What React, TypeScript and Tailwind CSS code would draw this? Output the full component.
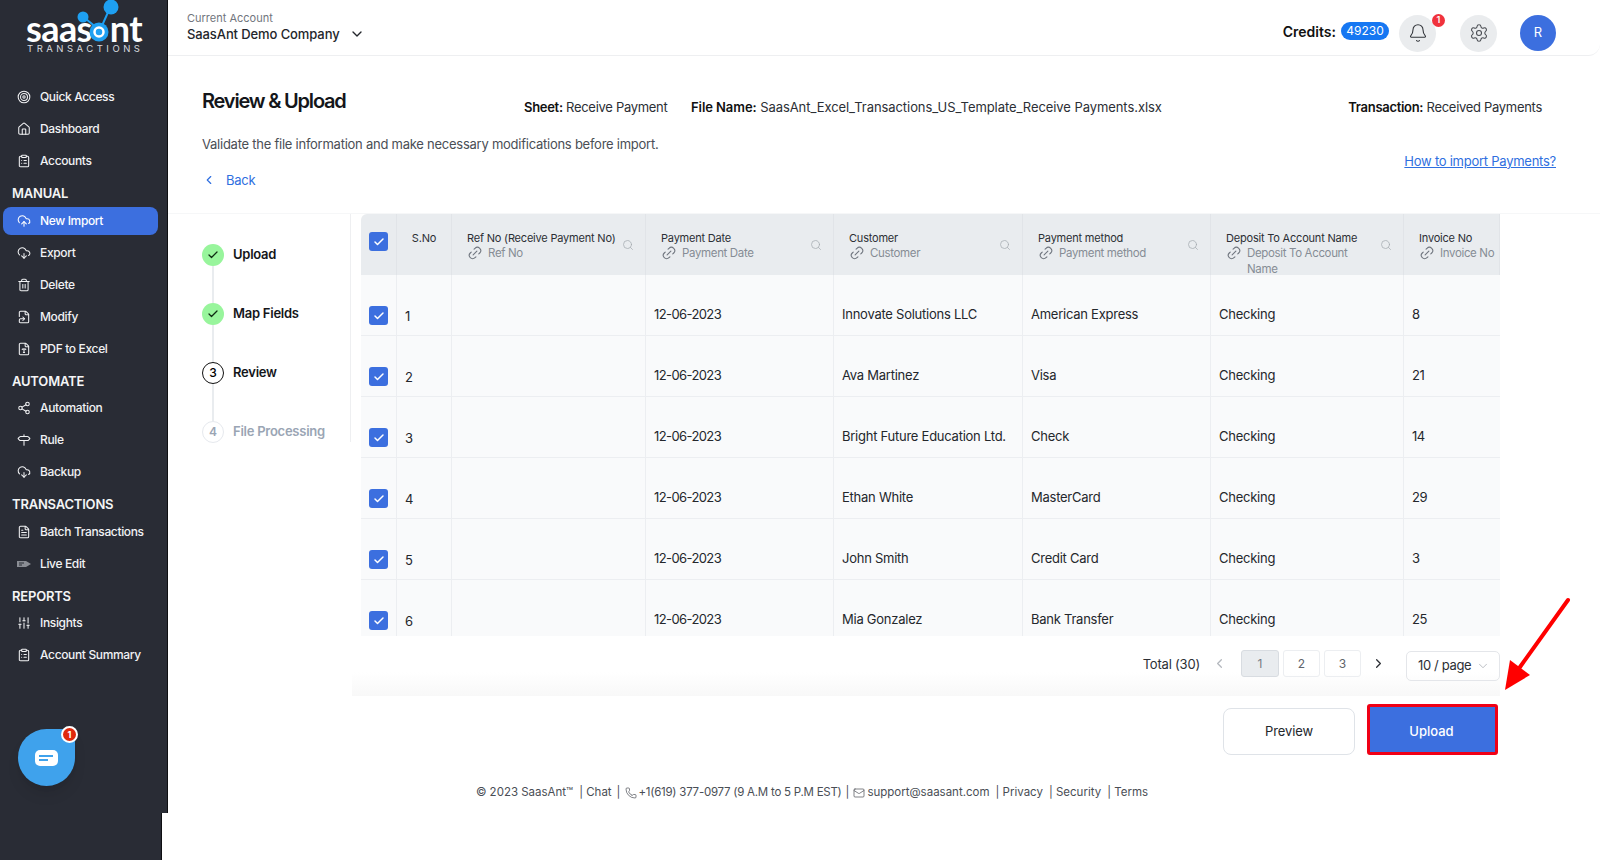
import {
  Bell,
  Check,
  ChevronDown,
  ChevronLeft,
  ChevronRight,
  ClipboardList,
  CloudDownload,
  CloudUpload,
  FileSymlink,
  FileText,
  FileType,
  Home,
  Link2,
  Mail,
  Phone,
  Search,
  Settings,
  Share2,
  Signpost,
  SlidersVertical,
  Target,
  Trash2,
} from "lucide-react";

function LiveEditIcon({ className }: { size?: number; strokeWidth?: number; className?: string }) {
  return (
    <svg className={className} width="14" height="14" viewBox="0 0 14 14">
      <path d="M0 4h9l5 3-5 3H0z" fill="#8a8d94" />
      <path d="M2 6h5M2 8h3" stroke="#292c35" strokeWidth="1" />
    </svg>
  );
}

const nav = [
  { label: "Quick Access", icon: Target },
  { label: "Dashboard", icon: Home },
  { label: "Accounts", icon: ClipboardList },
  { heading: "MANUAL" },
  { label: "New Import", icon: CloudUpload, active: true },
  { label: "Export", icon: CloudDownload },
  { label: "Delete", icon: Trash2 },
  { label: "Modify", icon: FileSymlink },
  { label: "PDF to Excel", icon: FileType },
  { heading: "AUTOMATE" },
  { label: "Automation", icon: Share2 },
  { label: "Rule", icon: Signpost },
  { label: "Backup", icon: CloudDownload },
  { heading: "TRANSACTIONS" },
  { label: "Batch Transactions", icon: FileText },
  { label: "Live Edit", icon: LiveEditIcon },
  { heading: "REPORTS" },
  { label: "Insights", icon: SlidersVertical },
  { label: "Account Summary", icon: ClipboardList },
];

const columns = [
  { w: "w-[36px]" },
  { w: "w-[55px]", title: "S.No" },
  { w: "w-[194px]", title: "Ref No (Receive Payment No)", sub: "Ref No" },
  { w: "w-[188px]", title: "Payment Date", sub: "Payment Date" },
  { w: "w-[189px]", title: "Customer", sub: "Customer" },
  { w: "w-[188px]", title: "Payment method", sub: "Payment method" },
  { w: "w-[193px]", title: "Deposit To Account Name", sub: "Deposit To Account Name" },
  { w: "w-[96px]", title: "Invoice No", sub: "Invoice No" },
];

const rows = [
  ["1", "12-06-2023", "Innovate Solutions LLC", "American Express", "8"],
  ["2", "12-06-2023", "Ava Martinez", "Visa", "21"],
  ["3", "12-06-2023", "Bright Future Education Ltd.", "Check", "14"],
  ["4", "12-06-2023", "Ethan White", "MasterCard", "29"],
  ["5", "12-06-2023", "John Smith", "Credit Card", "3"],
  ["6", "12-06-2023", "Mia Gonzalez", "Bank Transfer", "25"],
];

function Logo() {
  return (
    <div className="h-[81px] relative">
      <div className="absolute left-[26px] top-[18px] h-[20px] flex items-center text-[36px] leading-[20px] font-bold tracking-[-0.6px] text-white font-['Lato',sans-serif]">
        <span>saas</span>
        <span className="w-[18px]" />
        <span>nt</span>
      </div>
      <div className="absolute left-[27px] top-[44px] text-[9.5px] leading-[10px] tracking-[3.5px] text-[#d8dadf] whitespace-nowrap">
        TRANSACTIONS
      </div>
      {/* blue nodes around the @ */}
      <svg className="absolute left-[76px] top-0" width="44" height="44" viewBox="0 0 44 44">
        <circle cx="35" cy="7" r="7.5" fill="#1ea0f2" />
        <circle cx="7" cy="17" r="5.5" fill="#1ea0f2" />
        <path d="M33 10 25 28M10 19l11 9" stroke="#1ea0f2" strokeWidth="2" />
        <circle cx="23" cy="32" r="9.5" fill="#1ea0f2" />
        <circle cx="23" cy="32" r="4.5" fill="#1ea0f2" stroke="#fff" strokeWidth="2.5" />
      </svg>
    </div>
  );
}

function Sidebar() {
  return (
    <aside className="w-[168px] shrink-0 flex flex-col relative text-[#f1f2f4]">
      <div className="h-[813px] w-[168px] bg-[#292c35] border-r border-[#0e0f12]">
        <Logo />
        <nav className="flex flex-col">
          {nav.map((item, i) =>
            item.heading ? (
              <div key={i} className="h-[27.5px] pt-[6px] pl-3 flex items-center text-[13px] font-semibold tracking-[-0.2px] text-[#f4f5f6]">
                {item.heading}
              </div>
            ) : (
              <div key={i} className={`h-[32px] flex items-center ${item.active ? "" : "pl-[17px]"}`}>
                {item.active ? (
                  <div className="ml-[3px] w-[155px] h-[28px] bg-[#3c6fdf] rounded-lg flex items-center pl-[14px] text-white">
                    <item.icon size={14} strokeWidth={1.8} className="mr-[9px] shrink-0" />
                    <span className="text-[12px] font-medium tracking-[-0.35px]">{item.label}</span>
                  </div>
                ) : (
                  <>
                    {item.icon && <item.icon size={14} strokeWidth={1.8} className="mr-[9px] shrink-0" />}
                    <span className="text-[12px] font-medium tracking-[-0.35px]">{item.label}</span>
                  </>
                )}
              </div>
            )
          )}
        </nav>
      </div>
      <div className="h-[47px] w-[162px] bg-[#292c35] border-r border-[#0e0f12]" />
      {/* chat bubble */}
      <div className="absolute left-[18px] top-[729px] w-[57px] h-[57px] bg-[#3fa2ec] rounded-full rounded-tr-[6px] shadow-lg flex items-center justify-center">
        <div className="w-[23px] h-[16px] bg-white rounded-[5px] flex flex-col justify-center gap-[2px] pl-[4px]">
          <div className="w-[14px] h-[2px] bg-[#3fa2ec]" />
          <div className="w-[9px] h-[2px] bg-[#3fa2ec]" />
        </div>
        <div className="absolute -right-[3px] -top-[3px] w-[17px] h-[17px] rounded-full bg-[#e0290d] border-2 border-white text-white text-[9px] font-bold flex items-center justify-center">
          1
        </div>
      </div>
    </aside>
  );
}

function Header() {
  return (
    <header className="h-[56px] shrink-0 flex items-center pl-[19px] pr-[44px] border-b border-[#eeeff1] rounded-br-xl">
      <div className="flex flex-col mb-[2px]">
        <span className="text-[11px] leading-[14px] text-[#71757d]">Current Account</span>
        <div className="flex items-center mt-[1px]">
          <span className="text-[13px] leading-[16px] text-[#23262b] font-medium tracking-[-0.1px]">SaasAnt Demo Company</span>
          <ChevronDown size={16} className="ml-[9px] text-[#23262b]" />
        </div>
      </div>
      <div className="ml-auto flex items-center pt-[11px]">
        <span className="text-[14px] font-semibold text-[#111] -mt-[4px]">Credits:</span>
        <span className="ml-[5px] -mt-[4px] h-[18px] w-[48px] rounded-full bg-[#1677f2] text-white text-[12px] flex items-center justify-center">49230</span>
        <div className="ml-[10px] w-[37px] h-[37px] rounded-full bg-[#eaecee] flex items-center justify-center relative">
          <Bell size={20} strokeWidth={1.3} className="text-[#33363b]" />
          <span className="absolute -right-[9px] -top-[1px] w-[13px] h-[13px] rounded-full bg-[#f0323c] text-white text-[9px] font-semibold flex items-center justify-center">1</span>
        </div>
        <div className="ml-[24px] w-[37px] h-[37px] rounded-full bg-[#eaecee] flex items-center justify-center">
          <Settings size={20} strokeWidth={1.3} className="text-[#4a4d53]" />
        </div>
        <div className="ml-[23px] w-[36px] h-[36px] rounded-full bg-[#3c6fdf] text-white text-[13px] flex items-center justify-center">R</div>
      </div>
    </header>
  );
}

function Box() {
  return (
    <div className="w-[19px] h-[19px] rounded-[3px] bg-[#3c6fdf] flex items-center justify-center">
      <Check size={12} strokeWidth={3} className="text-white" />
    </div>
  );
}

function Stepper() {
  const steps = [
    { label: "Upload", state: "done" },
    { label: "Map Fields", state: "done" },
    { label: "Review", state: "current" },
    { label: "File Processing", state: "todo" },
  ];
  return (
    <div className="w-[183px] shrink-0 h-[228px] border-r border-[#eeeff1] pl-[34px] pt-[30px]">
      {steps.map((s, i) => (
        <div key={s.label} className={`flex ${i < 3 ? "h-[59px]" : ""}`}>
          <div className="flex flex-col items-center w-[22px] mr-[9px]">
            {s.state === "done" && (
              <div className="w-[22px] h-[22px] shrink-0 rounded-full bg-[#98f59c] flex items-center justify-center">
                <Check size={12} strokeWidth={2.5} className="text-[#0e2a12]" />
              </div>
            )}
            {s.state === "current" && (
              <div className="w-[22px] h-[22px] shrink-0 rounded-full border-[1.5px] border-[#111] text-[12px] font-medium flex items-center justify-center">3</div>
            )}
            {s.state === "todo" && (
              <div className="w-[22px] h-[22px] shrink-0 rounded-full border-[1.5px] border-[#e6e9ee] text-[12px] font-semibold text-[#9aa5b4] flex items-center justify-center">4</div>
            )}
            {i < 3 && <div className="w-[2px] flex-1 bg-[#e9ecef]" />}
          </div>
          <span className={`text-[13px] leading-[21px] font-semibold tracking-[-0.25px] ${s.state === "todo" ? "text-[#9aa5b4]" : "text-[#14161a]"}`}>
            {s.label}
          </span>
        </div>
      ))}
    </div>
  );
}

function HeaderCell({ col, index }: { col: (typeof columns)[number]; index: number }) {
  if (index === 0) {
    return (
      <div className={`${col.w} shrink-0 border-r border-[#e1e4e8] pl-[8px] pt-[18px]`}>
        <Box />
      </div>
    );
  }
  if (index === 1) {
    return (
      <div className={`${col.w} shrink-0 border-r border-[#e1e4e8] pt-[17px] text-center text-[11px] tracking-[-0.2px] leading-[14px] text-[#2c2f35]`}>
        {col.title}
      </div>
    );
  }
  return (
    <div className={`${col.w} shrink-0 border-r border-[#e1e4e8] pl-[15px] pr-[11px] flex items-start justify-between overflow-hidden`}>
      <div className="pt-[17px] min-w-0">
        <div className="text-[11px] tracking-[-0.2px] leading-[14px] text-[#2c2f35] whitespace-nowrap">{col.title}</div>
        <div className="flex text-[11.5px] tracking-[-0.35px] leading-[16px] text-[#868c95]">
          <Link2 size={16} strokeWidth={1.6} className="-rotate-45 mr-[5px] shrink-0 text-[#6f757e]" />
          <span className="w-[115px] shrink-0">{col.sub}</span>
        </div>
      </div>
      {index < 7 && <Search size={12} strokeWidth={1.5} className="text-[#a6abb2] mt-[25px] shrink-0" />}
    </div>
  );
}

function Cell({ w, children, last, pad = "pt-[20px]", track = "tracking-[-0.25px]" }: { w: string; children?: React.ReactNode; last?: boolean; pad?: string; track?: string }) {
  return (
    <div className={`${w} shrink-0 ${last ? "" : "border-r border-[#eceef1]"} pl-[8px] ${pad} ${track} flex items-center text-[13px] text-[#24272c] whitespace-nowrap`}>
      {children}
    </div>
  );
}

function ReviewTable() {
  return (
    <div className="h-[422px] overflow-hidden rounded-tl-md">
      <div className="flex h-[61px] bg-[#e9ecef] overflow-hidden">
        {columns.map((c, i) => (
          <HeaderCell key={i} col={c} index={i} />
        ))}
      </div>
      {rows.map((r) => (
        <div key={r[0]} className="flex h-[61px] bg-[#f9fafb] border-b border-[#eceef1] box-border">
          <Cell w="w-[36px]" pad="pt-[21px]"><Box /></Cell>
          <Cell w="w-[55px]" pad="pt-[23px]" track="tracking-[-0.5px]">{r[0]}</Cell>
          <Cell w="w-[194px]" />
          <Cell w="w-[188px]" track="tracking-[-0.6px]">{r[1]}</Cell>
          <Cell w="w-[189px]">{r[2]}</Cell>
          <Cell w="w-[188px]">{r[3]}</Cell>
          <Cell w="w-[193px]">Checking</Cell>
          <Cell w="w-[96px]" last track="tracking-[-0.5px]">{r[4]}</Cell>
        </div>
      ))}
    </div>
  );
}

function Pagination() {
  return (
    <div className="h-[60px] -ml-[9px] bg-gradient-to-b from-white from-60% to-[#f8f8f8] flex items-start justify-end pt-[14px] text-[13px] text-[#2c2f35]">
      <span className="h-[29px] flex items-center tracking-[-0.2px]">Total (30)</span>
      <ChevronLeft size={15} className="ml-[12px] mt-[6px] text-[#b4b8be]" />
      <div className="ml-[14px] w-[38px] h-[27px] rounded-[3px] bg-[#e9ecef] border border-[#d8dce1] text-[#767b83] text-[12px] flex items-center justify-center">1</div>
      <div className="ml-[4px] w-[37px] h-[27px] rounded-[3px] border border-[#eceef1] text-[#60646b] text-[12px] flex items-center justify-center">2</div>
      <div className="ml-[4px] w-[37px] h-[27px] rounded-[3px] border border-[#eceef1] text-[#60646b] text-[12px] flex items-center justify-center">3</div>
      <ChevronRight size={15} className="ml-[10px] mt-[6px] text-[#2c2f35]" />
      <div className="ml-[20px] mt-[1px] w-[94px] h-[30px] rounded-[5px] border border-[#e4e6ea] flex items-center pl-[11px] tracking-[-0.35px] text-[#2c2f35]">
        10 / page
        <ChevronDown size={14} strokeWidth={1.2} className="ml-[5px] text-[#a0a5ac]" />
      </div>
    </div>
  );
}

export default function App() {
  return (
    <div className="h-screen w-full flex overflow-hidden bg-white font-['Inter',sans-serif] relative">
      <Sidebar />
      <main className="flex-1 min-w-0 flex flex-col">
        <Header />
        <section className="h-[158px] shrink-0 border-b border-[#f6f7f8] pl-[34px] pr-[44px]">
          <div className="flex items-center pt-[29px]">
            <h1 className="w-[322px] text-[20px] leading-[26px] font-semibold tracking-[-1.2px] text-[#14161a]">Review &amp; Upload</h1>
            <span className="w-[167px] text-[13px] mt-[13px] tracking-[-0.3px] text-[#2c2f35]"><b className="font-semibold text-[#111]">Sheet:</b> Receive Payment</span>
            <span className="text-[13px] mt-[13px] tracking-[-0.07px] text-[#2c2f35]"><b className="font-semibold text-[#111]">File Name:</b> SaasAnt_Excel_Transactions_US_Template_Receive Payments.xlsx</span>
            <span className="ml-auto mr-[14px] text-[13px] mt-[13px] tracking-[-0.3px] text-[#2c2f35]"><b className="font-semibold text-[#111]">Transaction:</b> Received Payments</span>
          </div>
          <div className="flex items-start mt-[17px]">
            <div>
              <p className="text-[13px] leading-[18px] tracking-[-0.25px] text-[#4a4e55]">Validate the file information and make necessary modifications before import.</p>
              <div className="flex items-center mt-[18px] text-[13px] tracking-[-0.25px] text-[#2f6fe0]">
                <ChevronLeft size={14} className="mr-[10px]" />
                Back
              </div>
            </div>
            <a className="ml-auto mt-[17px] text-[13px] tracking-[-0.25px] text-[#2f6fe0] underline">How to import Payments?</a>
          </div>
        </section>
        <div className="flex">
          <Stepper />
          <div className="w-[1157px] pl-[10px] pr-[8px]">
            <ReviewTable />
            <Pagination />
            <div className="flex justify-end gap-[12px] mt-[8px] pr-[2px]">
              <button className="w-[132px] h-[47px] mt-[4px] rounded-lg border border-[#dfe3e8] text-[13px] tracking-[-0.1px] text-[#24272c]">Preview</button>
              <button className="w-[131px] h-[51px] pt-[5px] pr-[2px] bg-[#3c6fdf] border-[3px] border-[#f00015] rounded-[3px] text-[13px] font-medium text-white">Upload</button>
            </div>
          </div>
        </div>
        <footer className="flex items-center justify-center gap-[4px] text-[11.5px] text-[#4a4e55] mt-[29px] pr-[144px]">
          <span>© 2023 SaasAnt™</span>
          <span className="ml-[2px]">| Chat</span>
          <span className="ml-[1px]">|</span>
          <Phone size={12} strokeWidth={1.4} className="ml-[1px]" />
          <span className="-ml-[3px] tracking-[-0.25px]">+1(619) 377-0977 (9 A.M to 5 P.M EST)</span>
          <span>|</span>
          <Mail size={12} strokeWidth={1.4} />
          <span className="-ml-[2px]">support@saasant.com</span>
          <span className="ml-[2px]">| Privacy</span>
          <span className="ml-[2px]">| Security</span>
          <span className="ml-[2px]">| Terms</span>
        </footer>
      </main>
      {/* red annotation arrow */}
      <svg className="absolute left-[1500px] top-[595px] pointer-events-none" width="75" height="100" viewBox="0 0 75 100">
        <path d="M68 5 20 72" stroke="#f00" strokeWidth="4" strokeLinecap="round" />
        <path d="M5 95 10 65 30 80Z" fill="#f00" />
      </svg>
    </div>
  );
}
